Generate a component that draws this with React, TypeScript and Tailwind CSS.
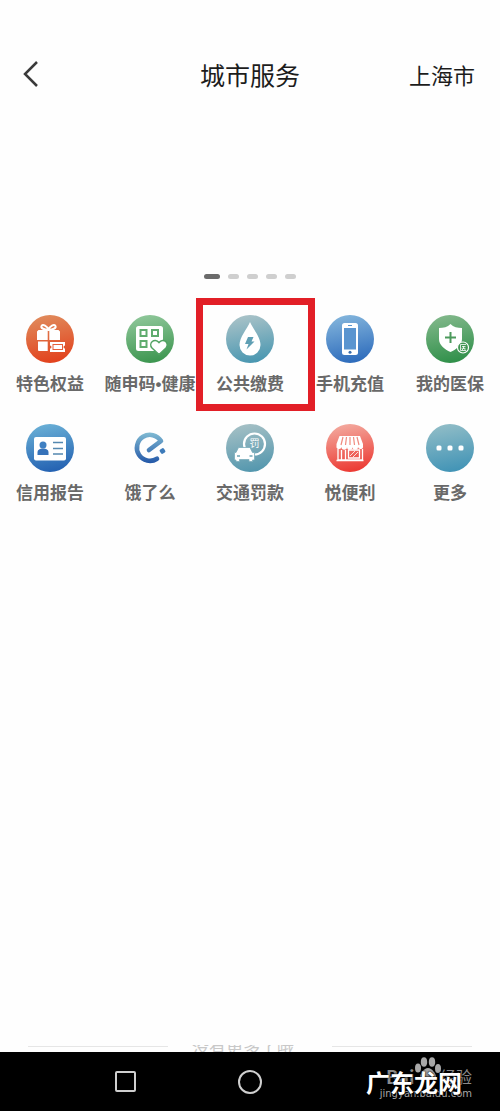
import type { ReactNode } from "react";

type ServiceProps = {
  label: string;
  icon: ReactNode;
  active?: boolean;
};

function Service({ label, icon, active }: ServiceProps) {
  return (
    <li className={active ? "relative z-10" : ""}>
      <button className="w-full flex flex-col items-center gap-[9px] whitespace-nowrap">
        {icon}
        <span className="font-['Liberation_Sans','Noto_Sans_CJK_SC',sans-serif] text-[17px] leading-[26px] font-bold text-[#696969]">
          {label}
        </span>
      </button>
      {active && (
        <span className="absolute -top-[17px] -bottom-[13px] -left-1 -right-[15px] border-[7px] border-[#e21f27] pointer-events-none" />
      )}
    </li>
  );
}

type DiscProps = {
  id: string;
  from: string;
  to: string;
  children: ReactNode;
};

function Disc({ id, from, to, children }: DiscProps) {
  return (
    <svg viewBox="0 0 48 48" className="w-12 h-12" aria-hidden="true">
      <defs>
        <linearGradient id={id} x1="0.3" y1="0" x2="0.5" y2="1">
          <stop offset="0" stopColor={from} />
          <stop offset="1" stopColor={to} />
        </linearGradient>
      </defs>
      <circle cx="24" cy="24" r="24" fill={`url(#${id})`} />
      {children}
    </svg>
  );
}

function GiftIcon() {
  return (
    <Disc id="gift" from="#e08b5c" to="#e2421d">
      <path
        d="M22.500 15c-1-4-6-6.500-7-4s3 3.500 7 4c1-4 6-6.500 7-4s-3 3.500-7 4z"
        fill="none"
        stroke="#fff"
        strokeWidth="2"
      />
      <path d="M12.500 15h9.200v10h-10.700v-8.500zM23.300 15h9.200l1.500 1.500v8.500h-10.700zM12 26.500h9.700v9.500h-8.700a1 1 0 0 1-1-1z" fill="#fff" />
      <path d="M24 27h15v3.500a1.500 1.500 0 0 0 0 3v3.500h-15v-3.500a1.500 1.500 0 0 0 0-3z" fill="#fff" />
      <rect x="27" y="29.500" width="9.500" height="5" fill="none" stroke="#e5603a" />
    </Disc>
  );
}

function HealthCodeIcon() {
  return (
    <Disc id="code" from="#8fc79a" to="#3d9650">
      <rect x="10" y="11" width="27" height="25" rx="2.500" fill="#fff" />
      <g fill="none" stroke="#5fac6e" strokeWidth="2">
        <rect x="14.500" y="15" width="6" height="6" />
        <rect x="26" y="15" width="6" height="6" />
        <rect x="14.500" y="26" width="6" height="6" />
      </g>
      <path
        d="M33 39.500l-7-6.500c-4-4.500 2.500-11 7-5.500 4.500-5.500 11 1 7 5.500z"
        fill="#fff"
        stroke="#51a362"
        strokeWidth="1.500"
      />
    </Disc>
  );
}

function DropIcon() {
  return (
    <Disc id="drop" from="#aac3c8" to="#4a97b1">
      <path d="M24 7c3 7 10.500 15 10.500 23a10.500 10.500 0 0 1-21 0c0-8 7.500-16 10.500-23z" fill="#fff" />
      <path d="M22 22h5.500l-2 4.500h3l-8 8 2-5.500h-3.500z" fill="#5f9fb4" />
    </Disc>
  );
}

function PhoneIcon() {
  return (
    <Disc id="phone" from="#83b5dc" to="#2e6cbc">
      <rect x="16" y="8" width="16" height="32" rx="2.500" fill="#fff" />
      <rect x="18" y="13" width="12" height="21.500" fill="#5a95d0" />
      <path d="M22 10.500h4" stroke="#5a95d0" />
      <circle cx="24" cy="37.300" r="1.500" fill="#3b6fae" />
    </Disc>
  );
}

function InsuranceIcon() {
  return (
    <Disc id="insurance" from="#82b88b" to="#30904a">
      <path d="M24.500 9c3 3 7 4 11.500 4v11c0 6-5.500 10.500-11.500 13-6-2.500-11.500-7-11.500-13v-11c4.500 0 8.500-1 11.500-4z" fill="#fff" />
      <path d="M24.500 17v11M19 22.500h11" stroke="#4c9a5c" strokeWidth="2" />
      <circle cx="37" cy="32.500" r="5.500" fill="#429653" stroke="#fff" strokeWidth="1.200" />
      <path d="M40 29.500h-5.500v6h5.500M36 31.500h3.500M35.500 33.300h4M37.500 31v2.500l-1.500 1.500M37.700 33.300l1.500 1.500" fill="none" stroke="#fff" strokeWidth="0.800" />
    </Disc>
  );
}

function ReportIcon() {
  return (
    <Disc id="report" from="#6ab0d6" to="#2462b2">
      <rect x="8" y="13" width="32" height="23.500" rx="2" fill="#fff" />
      <circle cx="17" cy="21" r="3.500" fill="#3f80c2" />
      <path d="M11.500 31v-2.500c0-3 2.500-4 5.500-4s5.500 1 5.500 4v2.500z" fill="#3673ba" />
      <path d="M27 18.500h10M27 24.500h10M27 30h10" stroke="#5488b0" strokeWidth="1.500" />
    </Disc>
  );
}

function ElemeIcon() {
  return (
    <svg viewBox="0 0 48 48" className="w-12 h-12" aria-hidden="true">
      <defs>
        <linearGradient id="eleme" gradientUnits="userSpaceOnUse" x1="24" y1="9" x2="24" y2="39">
          <stop offset="0" stopColor="#7fb9d2" />
          <stop offset="1" stopColor="#2458a8" />
        </linearGradient>
      </defs>
      <path
        d="M23 26l12-9a13 13 0 1 0-4 17.700"
        fill="none"
        stroke="url(#eleme)"
        strokeWidth="4.600"
        strokeLinejoin="round"
        strokeLinecap="round"
      />
      <rect x="34" y="24.500" width="5" height="5" rx="1.500" transform="rotate(-35 36.500 27)" fill="#3d7bba" />
    </svg>
  );
}

function FineIcon() {
  return (
    <Disc id="fine" from="#a5c0c5" to="#5497ae">
      <circle cx="28.500" cy="20" r="10.500" fill="none" stroke="#fff" strokeWidth="2.200" />
      <text x="28.500" y="23" fontSize="10" textAnchor="middle" fill="#fff">
        罚
      </text>
      <path
        d="M12.500 23.500h11.500l2.500 5h2v7.500h-2v1.500h-3.500v-2h-9.500v2h-3.500v-1.500h-1.500v-7.500h1.500z"
        fill="#fff"
        stroke="#7badbb"
        strokeWidth="0.800"
      />
      <path d="M11 32h3M23.500 32h3" stroke="#6fa5b5" strokeWidth="1.500" />
    </Disc>
  );
}

function ShopIcon() {
  return (
    <Disc id="shop" from="#f3aa9f" to="#ec3a33">
      <path d="M13.500 12h20.500l3 8v2a2.500 2.500 0 0 1-5 1 2.700 2.700 0 0 1-5.500 0 2.700 2.700 0 0 1-5.500 0 2.700 2.700 0 0 1-5.500 0 2.500 2.500 0 0 1-5-1v-2z" fill="#fff" />
      <path d="M17 13l-2 8M20.500 13l-1 8M24 13v8M27.500 13l1 8M31 13l2 8" stroke="#f08a7e" strokeWidth="1.200" />
      <path d="M12 25v11h24.500v-11M10.500 36.500h27M15.500 26v10M19.500 26v10M22.500 26h11v8h-11z" fill="none" stroke="#fff" strokeWidth="1.300" />
      <path d="M24 32l5-5M27 33l5-5" stroke="#fff" strokeWidth="0.800" />
    </Disc>
  );
}

function MoreIcon() {
  return (
    <Disc id="more" from="#91bdc7" to="#4294b6">
      <rect x="10.500" y="21.500" width="5" height="5" rx="1.500" fill="#fff" />
      <rect x="21.500" y="21.500" width="5" height="5" rx="1.500" fill="#fff" />
      <rect x="32.500" y="21.500" width="5" height="5" rx="1.500" fill="#fff" />
    </Disc>
  );
}

function Watermark() {
  return (
    <div className="absolute right-7 top-1 w-[106px] h-12 text-[#a8a8a8]">
      <svg viewBox="0 0 28 24" className="absolute left-12 top-0 w-7 h-6" fill="currentColor" aria-hidden="true">
        <ellipse cx="4" cy="12" rx="3" ry="4.500" />
        <ellipse cx="10" cy="6" rx="3.200" ry="4.800" />
        <ellipse cx="18" cy="6" rx="3.200" ry="4.800" />
        <ellipse cx="24" cy="12.500" rx="3" ry="4.500" />
        <path d="M14 12c4 0 8 6 8 9s-3 3-8 3-8 0-8-3 4-9 8-9z" />
      </svg>
      <span className="absolute left-5 top-2 text-lg leading-6 font-bold text-[#8a8a8a]">Bai</span>
      <span className="absolute right-0 top-2 text-base leading-6 whitespace-nowrap text-[#8a8a8a]">经验</span>
      <span className="absolute right-0 top-[30px] font-['DejaVu_Sans',sans-serif] text-[10px] leading-4">
        jingyan.baidu.com
      </span>
      <span className="absolute left-0 top-3 text-[24px] leading-7 font-bold text-white whitespace-nowrap [text-shadow:0_0_2px_#000,0_0_2px_#000]">
        广东龙网
      </span>
    </div>
  );
}

export default function App() {
  return (
    <div className="min-h-screen flex flex-col bg-[#fefefe] overflow-x-hidden font-['Noto_Sans_CJK_SC',sans-serif]">
      <header className="mt-12 h-[52px] grid grid-cols-3 items-center px-[25px] text-[#1c1c1c]">
        <button aria-label="返回" className="justify-self-start -ml-1">
          <svg viewBox="0 0 24 28" className="w-6 h-7" fill="none" stroke="#3a3a3a" strokeWidth="2.500" aria-hidden="true">
            <path d="M16 2L4 14l12 12" />
          </svg>
        </button>
        <h1 className="justify-self-center text-[25px] leading-8 whitespace-nowrap">城市服务</h1>
        <button className="justify-self-end text-[22px] leading-8">上海市</button>
      </header>

      <main className="flex-1 flex flex-col">
        <div className="mt-[174px] flex justify-center gap-2">
          <span className="w-4 h-[5px] rounded-full bg-[#6b6b6b]" />
          <span className="w-[11px] h-[5px] rounded-full bg-[#cfcfcf]" />
          <span className="w-[11px] h-[5px] rounded-full bg-[#cfcfcf]" />
          <span className="w-[11px] h-[5px] rounded-full bg-[#cfcfcf]" />
          <span className="w-[11px] h-[5px] rounded-full bg-[#cfcfcf]" />
        </div>

        <ul className="mt-9 grid grid-cols-5 gap-y-[26px]">
          <Service label="特色权益" icon={<GiftIcon />} />
          <Service label="随申码•健康" icon={<HealthCodeIcon />} />
          <Service label="公共缴费" icon={<DropIcon />} active />
          <Service label="手机充值" icon={<PhoneIcon />} />
          <Service label="我的医保" icon={<InsuranceIcon />} />
          <Service label="信用报告" icon={<ReportIcon />} />
          <Service label="饿了么" icon={<ElemeIcon />} />
          <Service label="交通罚款" icon={<FineIcon />} />
          <Service label="悦便利" icon={<ShopIcon />} />
          <Service label="更多" icon={<MoreIcon />} />
        </ul>

        <div className="mt-auto h-[7px] px-7 flex items-start gap-6 overflow-hidden">
          <span className="flex-1 h-px mt-px bg-[#e6e6e6]" />
          <p className="-mt-2 pr-[14px] text-[17px] leading-5 text-[#c8c8c8]">没有更多了哦</p>
          <span className="flex-1 h-px mt-px bg-[#e6e6e6]" />
        </div>
      </main>

      <nav className="relative h-[59px] pl-[12.5%] bg-black flex items-center">
        <div className="w-2/7 flex justify-center">
          <button aria-label="最近任务" className="w-[21px] h-[21px] border-2 border-[#cfcfcf] rounded-xs" />
        </div>
        <div className="w-2/7 flex justify-center">
          <button aria-label="主屏幕" className="w-6 h-6 border-2 border-[#cfcfcf] rounded-full" />
        </div>
        <Watermark />
      </nav>
    </div>
  );
}
